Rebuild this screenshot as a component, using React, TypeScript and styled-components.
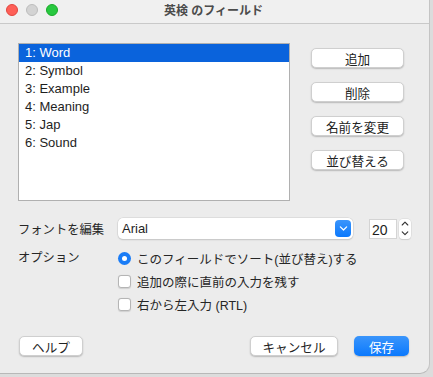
import React from "react";
import styled, { createGlobalStyle } from "styled-components";

const GlobalStyle = createGlobalStyle`
  html, body {
    margin: 0;
    padding: 0;
    background: #dcdcdc;
    font-family: "Liberation Sans", "Noto Sans CJK JP", sans-serif;
    -webkit-font-smoothing: antialiased;
  }
  * { box-sizing: border-box; }
`;

const fields = ["1: Word", "2: Symbol", "3: Example", "4: Meaning", "5: Jap", "6: Sound"];
const sideButtons = ["追加", "削除", "名前を変更", "並び替える"];

const Window = styled.div`
  width: 430px;
  height: 374px;
  background: #ececec;
  border-radius: 0 0 10px 0;
  border-right: 1px solid #c4c4c4;
  border-bottom: 1px solid #b8b8b8;
  display: flex;
  flex-direction: column;
  overflow: hidden;
`;

const TitleBar = styled.div`
  height: 24px;
  flex-shrink: 0;
  background: #f0f0f0;
  border-bottom: 1px solid #c9c9c9;
  position: relative;
  display: flex;
  align-items: center;
  justify-content: center;
  padding-bottom: 4px;
`;

const Lights = styled.div`
  position: absolute;
  left: 6px;
  top: 4px;
  display: flex;
  gap: 8px;
`;

const Light = styled.span<{ $color: string; $border: string }>`
  width: 12px;
  height: 12px;
  border-radius: 50%;
  background: ${(p) => p.$color};
  border: 0.5px solid ${(p) => p.$border};
`;

const Title = styled.div`
  font-size: 12px;
  font-weight: bold;
  color: #4b4b4b;
  margin-left: -2px;
`;

const Body = styled.div`
  flex: 1;
  padding: 19px 0 0 18px;
  display: flex;
  flex-direction: column;
`;

const TopRow = styled.div`
  display: flex;
  gap: 21px;
`;

const ListBox = styled.div`
  width: 272px;
  height: 158px;
  background: #fff;
  border: 1px solid #b0b0b0;
  display: flex;
  flex-direction: column;
`;

const ListItem = styled.div<{ $selected?: boolean }>`
  height: 18px;
  line-height: 18px;
  padding-left: 6px;
  font-size: 13px;
  color: ${(p) => (p.$selected ? "#fff" : "#1e1e1e")};
  background: ${(p) => (p.$selected ? "#0a63dc" : "transparent")};
`;

const SideColumn = styled.div`
  display: flex;
  flex-direction: column;
  gap: 14px;
  padding-top: 5px;
`;

const PushButton = styled.button<{ $width: number; $primary?: boolean }>`
  width: ${(p) => p.$width}px;
  height: 20px;
  border-radius: 5px;
  border: ${(p) => (p.$primary ? "none" : "0.5px solid #cfcfcf")};
  background: ${(p) => (p.$primary ? "linear-gradient(#3a95fb, #0b79fd)" : "#fff")};
  box-shadow: 0 1px 1.5px rgba(0, 0, 0, 0.22);
  color: ${(p) => (p.$primary ? "#fff" : "#222")};
  font-family: inherit;
  font-size: 12.6px;
  padding: 0;
  display: flex;
  align-items: center;
  justify-content: center;
`;

const FormRow = styled.div<{ $height: number; $top: number; $alignTop?: boolean }>`
  display: flex;
  align-items: ${(p) => (p.$alignTop ? "flex-start" : "center")};
  height: ${(p) => p.$height}px;
  margin-top: ${(p) => p.$top}px;
`;

const Label = styled.div<{ $lineHeight?: number }>`
  width: 100px;
  font-size: 12.3px;
  color: #262626;
  line-height: ${(p) => (p.$lineHeight ? `${p.$lineHeight}px` : "normal")};
`;

const Select = styled.div`
  width: 235px;
  height: 21px;
  background: #fff;
  border-radius: 5px;
  box-shadow: 0 0 0 0.5px #cfcfcf, 0 1px 1.5px rgba(0, 0, 0, 0.2);
  display: flex;
  align-items: center;
  justify-content: space-between;
  padding: 0 2px 0 4px;
  font-size: 13px;
  color: #1e1e1e;
`;

const SelectArrow = styled.span`
  width: 16px;
  height: 17px;
  border-radius: 4px;
  background: linear-gradient(#3b95fb, #0b79fd);
  display: flex;
  align-items: center;
  justify-content: center;
`;

const NumberField = styled.div`
  margin-left: 16px;
  width: 28px;
  height: 20px;
  background: #fff;
  border: 0.5px solid #d4d4d4;
  font-size: 14px;
  color: #1e1e1e;
  padding-left: 2px;
  line-height: 20px;
`;

const Stepper = styled.div`
  margin-left: 2px;
  width: 12px;
  height: 20px;
  background: #fff;
  border-radius: 4px;
  box-shadow: 0 0 0 0.5px #d6d6d6, 0 1px 1px rgba(0, 0, 0, 0.15);
  display: flex;
  flex-direction: column;
  align-items: center;
  justify-content: space-around;
`;

const OptionList = styled.div`
  display: flex;
  flex-direction: column;
`;

const Option = styled.div`
  height: 23px;
  display: flex;
  align-items: center;
  gap: 6px;
  font-size: 12.5px;
  color: #262626;
`;

const Radio = styled.span`
  width: 13px;
  height: 13px;
  border-radius: 50%;
  background: #1a7cf6;
  display: flex;
  align-items: center;
  justify-content: center;
  &::after {
    content: "";
    width: 5px;
    height: 5px;
    border-radius: 50%;
    background: #fff;
  }
`;

const Checkbox = styled.span`
  width: 13px;
  height: 13px;
  border-radius: 3px;
  background: #fff;
  border: 0.5px solid #b5b5b5;
  box-shadow: 0 0.5px 1px rgba(0, 0, 0, 0.12);
`;

const Footer = styled.div`
  display: flex;
  align-items: center;
  margin-top: 66px;
  padding-left: 1px;
  padding-right: 20px;
`;

const Spacer = styled.div`
  flex: 1;
`;

const FooterGap = styled.div`
  width: 16px;
`;

const Chevron = ({ up, color, size }: { up?: boolean; color: string; size: number }) => (
  <svg width={size} height={size * 0.6} viewBox="0 0 10 6">
    <path
      d={up ? "M1.5 5 L5 1.5 L8.5 5" : "M1.5 1 L5 4.5 L8.5 1"}
      fill="none"
      stroke={color}
      strokeWidth="1.4"
      strokeLinecap="round"
      strokeLinejoin="round"
    />
  </svg>
);

export default function App() {
  return (
    <>
      <GlobalStyle />
      <Window>
        <TitleBar>
          <Lights>
            <Light $color="#fe5f57" $border="#e2463f" />
            <Light $color="#d3d3d3" $border="#bdbdbd" />
            <Light $color="#28c840" $border="#1aab29" />
          </Lights>
          <Title>英検 のフィールド</Title>
        </TitleBar>
        <Body>
          <TopRow>
            <ListBox>
              {fields.map((f, i) => (
                <ListItem key={f} $selected={i === 0}>
                  {f}
                </ListItem>
              ))}
            </ListBox>
            <SideColumn>
              {sideButtons.map((b) => (
                <PushButton key={b} $width={93}>
                  {b}
                </PushButton>
              ))}
            </SideColumn>
          </TopRow>

          <FormRow $height={21} $top={17}>
            <Label>フォントを編集</Label>
            <Select>
              <span>Arial</span>
              <SelectArrow>
                <Chevron color="#fff" size={9} />
              </SelectArrow>
            </Select>
            <NumberField>20</NumberField>
            <Stepper>
              <Chevron up color="#333" size={8} />
              <Chevron color="#333" size={8} />
            </Stepper>
          </FormRow>

          <FormRow $height={23} $top={8} $alignTop>
            <Label $lineHeight={23}>オプション</Label>
            <OptionList>
              <Option>
                <Radio />
                このフィールドでソート(並び替え)する
              </Option>
              <Option>
                <Checkbox />
                追加の際に直前の入力を残す
              </Option>
              <Option>
                <Checkbox />
                右から左入力 (RTL)
              </Option>
            </OptionList>
          </FormRow>

          <Footer>
            <PushButton $width={64}>ヘルプ</PushButton>
            <Spacer />
            <PushButton $width={88}>キャンセル</PushButton>
            <FooterGap />
            <PushButton $width={55} $primary>
              保存
            </PushButton>
          </Footer>
        </Body>
      </Window>
    </>
  );
}
